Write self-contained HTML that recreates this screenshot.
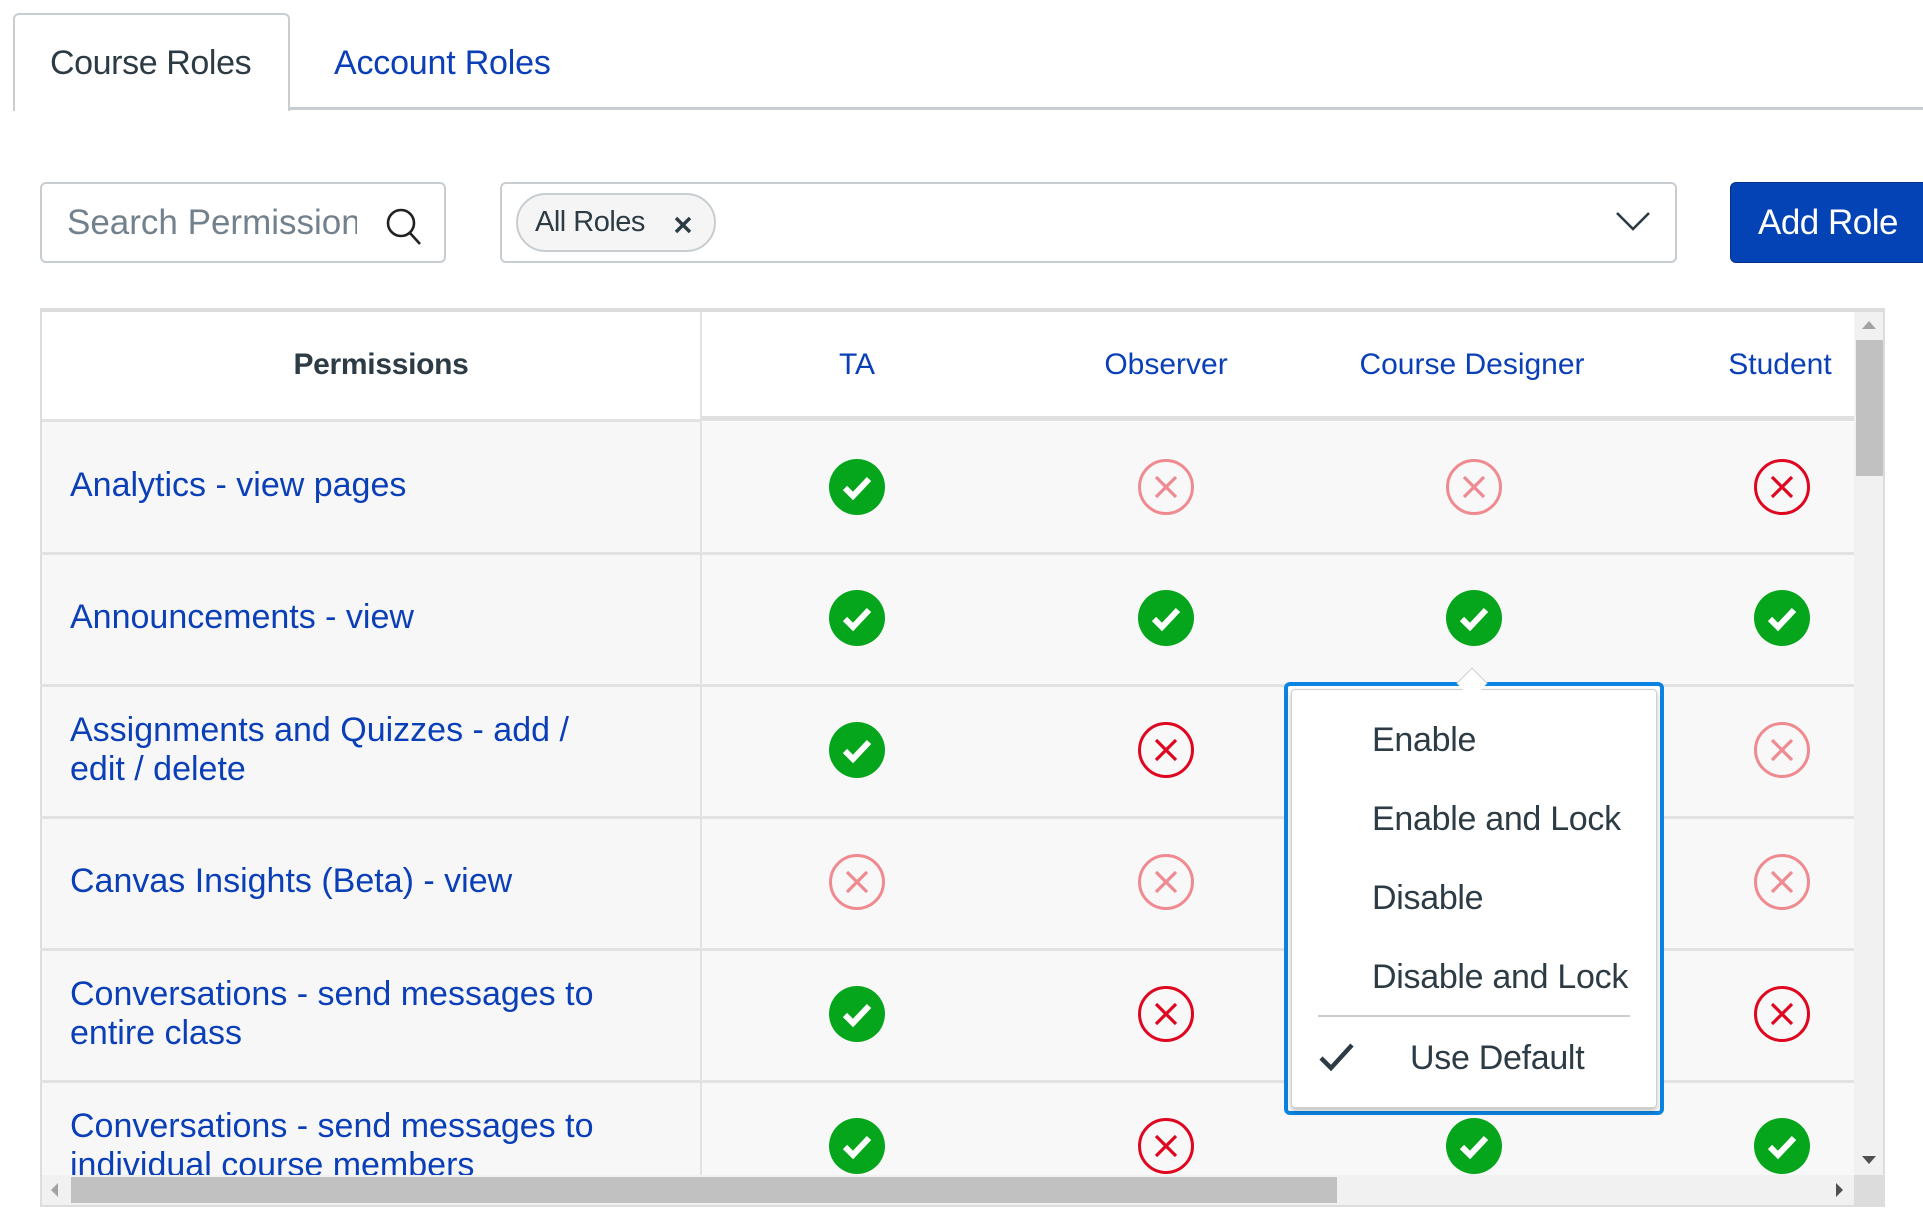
<!DOCTYPE html>
<html><head><meta charset="utf-8">
<style>
*{box-sizing:border-box;margin:0;padding:0}
body{width:1923px;height:1230px;background:#fff;font-family:"Liberation Sans",sans-serif;position:relative;overflow:hidden}
.a{position:absolute}
.blue{color:#0b3fb8}
.dark{color:#2d3b45}
.lbl{position:absolute;left:70px;font-size:34px;color:#0b3fb8;line-height:39px}
.ic{position:absolute;width:58px;height:58px}
.hline{position:absolute;left:40px;width:1814px;height:3px;background:#e2e2e2}
.mi{position:absolute;left:1372px;font-size:34px;color:#2d3b45;letter-spacing:-0.3px}
</style></head><body>
<div class="a" style="left:13px;top:13px;width:277px;height:98px;border:2px solid #c7cdd1;border-bottom:none;border-radius:6px 6px 0 0;background:#fff"></div>
<div class="a" style="left:289px;top:107px;width:1634px;height:3px;background:#c7cdd1"></div>
<div class="a dark" style="left:50px;top:44px;font-size:34px;letter-spacing:-0.4px">Course Roles</div>
<div class="a blue" style="left:334px;top:44px;font-size:34px;letter-spacing:-0.2px">Account Roles</div>
<div class="a" style="left:40px;top:182px;width:406px;height:81px;border:2px solid #c7cdd1;border-radius:6px"></div>
<div class="a" style="left:67px;top:203px;font-size:35px;color:#73818c;width:290px;overflow:hidden;white-space:nowrap">Search Permissions</div>
<svg class="a" style="left:384px;top:206px" width="40" height="40" viewBox="0 0 40 40"><circle cx="17" cy="17" r="13" fill="none" stroke="#222" stroke-width="2.6"/><line x1="26" y1="27" x2="36" y2="38" stroke="#222" stroke-width="2.6"/></svg>
<div class="a" style="left:500px;top:182px;width:1177px;height:81px;border:2px solid #c7cdd1;border-radius:6px"></div>
<div class="a" style="left:516px;top:193px;width:200px;height:59px;border:2px solid #c7cdd1;border-radius:30px;background:#f5f5f5"></div>
<div class="a dark" style="left:535px;top:206px;font-size:29px;letter-spacing:-0.5px">All Roles</div>
<svg class="a" style="left:673px;top:215px" width="20" height="20" viewBox="0 0 20 20"><path d="M3 3L17 17M17 3L3 17" stroke="#2d3b45" stroke-width="3.4"/></svg>
<svg class="a" style="left:1615px;top:210px" width="36" height="22" viewBox="0 0 36 22"><path d="M2 3L18 19L34 3" fill="none" stroke="#2d3b45" stroke-width="2.6"/></svg>
<div class="a" style="left:1730px;top:182px;width:200px;height:81px;background:#0443b5;border-radius:6px;border:1px solid #03308a"></div>
<div class="a" style="left:1758px;top:203px;font-size:35px;color:#fff;letter-spacing:-0.5px">Add Role</div>
<div class="a" style="left:40px;top:308px;width:1845px;height:899px;border:2px solid #ddd;border-top:4px solid #ddd;background:#fff"></div>
<div class="a" style="left:42px;top:422px;width:659px;height:753px;background:#f7f7f7"></div>
<div class="a" style="left:702px;top:422px;width:1152px;height:753px;background:#f8f8f8"></div>
<div class="a" style="left:700px;top:312px;width:2px;height:863px;background:#e2e2e2"></div>
<div class="a" style="left:42px;top:419px;width:659px;height:3px;background:#e2e2e2"></div>
<div class="a" style="left:702px;top:416px;width:1152px;height:5px;background:#e0e0e0"></div>
<div class="a dark" style="left:0;width:762px;text-align:center;top:348px;font-size:30px;font-weight:bold;letter-spacing:-0.3px">Permissions</div>
<div class="a blue" style="left:757px;width:200px;text-align:center;top:348px;font-size:30px">TA</div>
<div class="a blue" style="left:1066px;width:200px;text-align:center;top:348px;font-size:30px">Observer</div>
<div class="a blue" style="left:1322px;width:300px;text-align:center;top:348px;font-size:30px">Course Designer</div>
<div class="a blue" style="left:1680px;width:200px;text-align:center;top:348px;font-size:30px">Student</div>
<div class="hline" style="top:552px"></div>
<div class="hline" style="top:684px"></div>
<div class="hline" style="top:816px"></div>
<div class="hline" style="top:948px"></div>
<div class="hline" style="top:1080px"></div>
<div class="lbl" style="top:466px">Analytics - view pages</div>
<div class="lbl" style="top:598px">Announcements - view</div>
<div class="lbl" style="top:711px">Assignments and Quizzes - add /<br>edit / delete</div>
<div class="lbl" style="top:862px">Canvas Insights (Beta) - view</div>
<div class="lbl" style="top:975px">Conversations - send messages to<br>entire class</div>
<div class="a" style="left:42px;top:1083px;width:659px;height:92px;overflow:hidden"><div class="lbl" style="left:28px;top:24px">Conversations - send messages to<br>individual course members</div></div>
<svg width="0" height="0" style="position:absolute">
<defs>
<g id="ok"><circle cx="29" cy="29" r="28" fill="#05a51c"/><path d="M17 30L25 38L41 21" fill="none" stroke="#fff" stroke-width="6"/></g>
<g id="xd"><circle cx="29" cy="29" r="26.5" fill="none" stroke="#e0061f" stroke-width="3"/><path d="M19 19L39 39M39 19L19 39" stroke="#e0061f" stroke-width="3.2"/></g>
<g id="xl"><circle cx="29" cy="29" r="26.5" fill="none" stroke="#ef8a90" stroke-width="3"/><path d="M19 19L39 39M39 19L19 39" stroke="#ef8a90" stroke-width="3.2"/></g>
</defs></svg>
<svg class="ic" style="left:828px;top:458px"><use href="#ok"/></svg>
<svg class="ic" style="left:1137px;top:458px"><use href="#xl"/></svg>
<svg class="ic" style="left:1445px;top:458px"><use href="#xl"/></svg>
<svg class="ic" style="left:1753px;top:458px"><use href="#xd"/></svg>
<svg class="ic" style="left:828px;top:589px"><use href="#ok"/></svg>
<svg class="ic" style="left:1137px;top:589px"><use href="#ok"/></svg>
<svg class="ic" style="left:1445px;top:589px"><use href="#ok"/></svg>
<svg class="ic" style="left:1753px;top:589px"><use href="#ok"/></svg>
<svg class="ic" style="left:828px;top:721px"><use href="#ok"/></svg>
<svg class="ic" style="left:1137px;top:721px"><use href="#xd"/></svg>
<svg class="ic" style="left:1753px;top:721px"><use href="#xl"/></svg>
<svg class="ic" style="left:828px;top:853px"><use href="#xl"/></svg>
<svg class="ic" style="left:1137px;top:853px"><use href="#xl"/></svg>
<svg class="ic" style="left:1753px;top:853px"><use href="#xl"/></svg>
<svg class="ic" style="left:828px;top:985px"><use href="#ok"/></svg>
<svg class="ic" style="left:1137px;top:985px"><use href="#xd"/></svg>
<svg class="ic" style="left:1753px;top:985px"><use href="#xd"/></svg>
<svg class="ic" style="left:828px;top:1117px"><use href="#ok"/></svg>
<svg class="ic" style="left:1137px;top:1117px"><use href="#xd"/></svg>
<svg class="ic" style="left:1445px;top:1117px"><use href="#ok"/></svg>
<svg class="ic" style="left:1753px;top:1117px"><use href="#ok"/></svg>
<div class="a" style="left:1854px;top:312px;width:29px;height:863px;background:#f1f1f1"></div>
<div class="a" style="left:1856px;top:340px;width:27px;height:136px;background:#c1c1c1"></div>
<div class="a" style="left:1862px;top:321px;width:0;height:0;border-left:7px solid transparent;border-right:7px solid transparent;border-bottom:8px solid #a3a3a3"></div>
<div class="a" style="left:1862px;top:1156px;width:0;height:0;border-left:7px solid transparent;border-right:7px solid transparent;border-top:8px solid #505050"></div>
<div class="a" style="left:42px;top:1175px;width:1812px;height:30px;background:#f1f1f1"></div>
<div class="a" style="left:71px;top:1177px;width:1266px;height:26px;background:#c1c1c1"></div>
<div class="a" style="left:1854px;top:1175px;width:29px;height:30px;background:#dcdcdc"></div>
<div class="a" style="left:51px;top:1183px;width:0;height:0;border-top:7px solid transparent;border-bottom:7px solid transparent;border-right:7px solid #a3a3a3"></div>
<div class="a" style="left:1836px;top:1183px;width:0;height:0;border-top:7px solid transparent;border-bottom:7px solid transparent;border-left:7px solid #505050"></div>
<div class="a" style="left:1284px;top:682px;width:380px;height:433px;border:4px solid #0a84e0;border-radius:6px;background:#fff"></div>
<div class="a" style="left:1291px;top:689px;width:366px;height:419px;border:1px solid #d0d0d0;border-radius:4px;background:#fff;box-shadow:0 3px 6px rgba(0,0,0,0.25)"></div>
<div class="a" style="left:1461px;top:672px;width:22px;height:22px;background:#fff;transform:rotate(45deg);border-left:1px solid #ccc;border-top:1px solid #ccc"></div>
<div class="mi" style="top:721px">Enable</div>
<div class="mi" style="top:800px">Enable and Lock</div>
<div class="mi" style="top:879px">Disable</div>
<div class="mi" style="top:958px">Disable and Lock</div>
<div class="a" style="left:1318px;top:1015px;width:312px;height:2px;background:#c7cdd1"></div>
<svg class="a" style="left:1318px;top:1040px" width="38" height="34" viewBox="0 0 38 34"><path d="M3 18L13 28L34 5" fill="none" stroke="#2d3b45" stroke-width="4.5"/></svg>
<div class="mi" style="left:1410px;top:1039px">Use Default</div>
</body></html>
